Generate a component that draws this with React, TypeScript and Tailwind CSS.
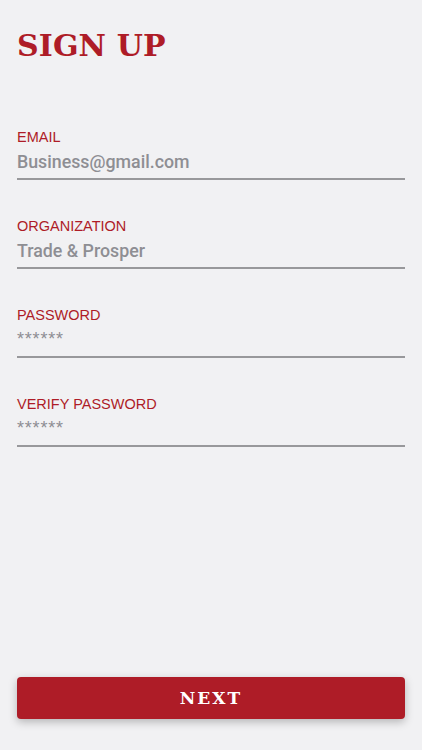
import React from "react";

const fields = [
  { label: "EMAIL", value: "Business@gmail.com", secret: false },
  { label: "ORGANIZATION", value: "Trade & Prosper", secret: false },
  { label: "PASSWORD", value: "******", secret: true },
  { label: "VERIFY PASSWORD", value: "******", secret: true },
];

export default function App() {
  return (
    <div className="flex h-[750px] w-[422px] flex-col bg-[#f1f1f3] px-[17px] font-['Liberation_Sans',Arial,sans-serif]">
      {/* Title */}
      <h1 className="mt-[26px] font-['DejaVu_Serif',serif] text-[30px] font-bold leading-[40px] tracking-[0.1px] text-[#ae1c27]">
        SIGN UP
      </h1>

      {/* Form fields */}
      <div className="mt-[62px] flex flex-col gap-[37px]">
        {fields.map((f) => (
          <div key={f.label} className="flex h-[52px] flex-col">
            <label className="h-[18px] text-[14.5px] leading-[18px] text-[#ae1c27]">{f.label}</label>
            {f.secret ? (
              <div className="h-[32px] pt-[6px] text-[18px] leading-[18px] tracking-[0.8px] text-[#8e8e93]">
                {f.value}
              </div>
            ) : (
              <div className="h-[32px] pt-[4px] font-['Roboto',sans-serif] text-[17.8px] font-medium leading-[24px] text-[#8e8e93]">
                {f.value}
              </div>
            )}
            <div className="h-[2px] bg-[#98989b]" />
          </div>
        ))}
      </div>

      <div className="flex-1" />

      {/* Next button */}
      <button className="mb-[31px] h-[42px] w-full rounded-[4px] bg-[#ae1c27] pt-[2px] font-['DejaVu_Serif',serif] text-[17px] font-bold tracking-[2px] text-white shadow-[0_3px_8px_rgba(0,0,0,0.25)]">
        NEXT
      </button>
    </div>
  );
}
